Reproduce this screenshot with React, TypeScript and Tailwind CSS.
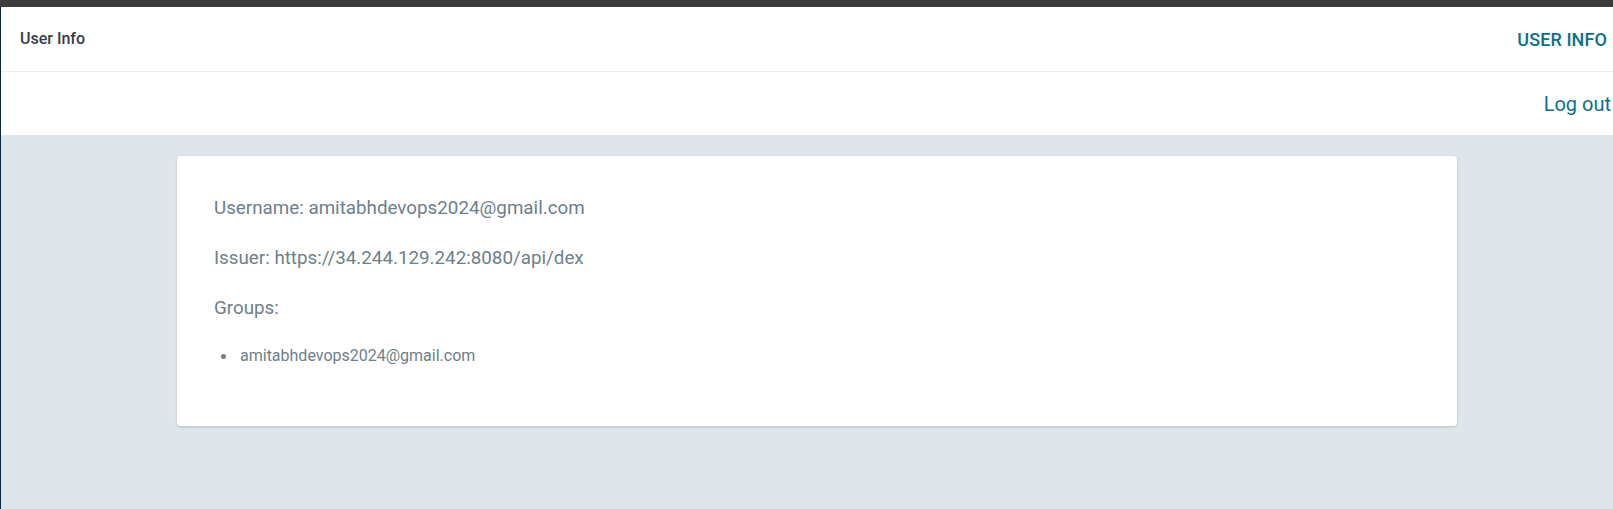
import React from "react";

export default function App() {
  return (
    <div
      className="w-[1613px] h-[509px] flex flex-col overflow-hidden bg-[#dee6eb]"
      style={{ fontFamily: "Roboto, 'Liberation Sans', sans-serif" }}
    >
      <div className="h-[7px] bg-[#3c3c3c] shrink-0" />
      <div className="flex flex-1 min-h-0">
        <div className="w-[1px] bg-[#0e2a3a] shrink-0" />
        <div className="flex-1 flex flex-col min-w-0">
          <div className="bg-white">
            <div className="h-[65px] flex items-center justify-between pl-[19px] pr-[6px] border-b border-[#eeeeee]">
              <span className="text-[16px] font-medium text-[#363c4a]">User Info</span>
              <span className="text-[18px] font-medium text-[#0d6f8b] tracking-[0.1px]">USER INFO</span>
            </div>
            <div className="h-[63px] flex items-center justify-end pr-[2px]">
              <span className="text-[20px] text-[#0d6f8b]">Log out</span>
            </div>
          </div>
          <div className="pt-[21px] pl-[176px]">
            <div className="w-[1280px] bg-white rounded-[4px] shadow-[0_1px_3px_rgba(0,0,0,0.18)] pt-[39px] px-[37px] pb-[59px] text-[#6d7f8b]">
              <p className="text-[18.8px] leading-[27px]">Username: amitabhdevops2024@gmail.com</p>
              <p className="mt-[23px] text-[18.8px] leading-[27px]">Issuer: https://34.244.129.242:8080/api/dex</p>
              <p className="mt-[23px] text-[18.8px] leading-[27px]">Groups:</p>
              <ul className="mt-[23px]">
                <li className="flex items-center text-[16px] leading-[22px]">
                  <span className="ml-[7px] w-[5px] h-[5px] rounded-full bg-[#6d7f8b] mr-[14px]" />
                  amitabhdevops2024@gmail.com
                </li>
              </ul>
            </div>
          </div>
        </div>
      </div>
    </div>
  );
}
